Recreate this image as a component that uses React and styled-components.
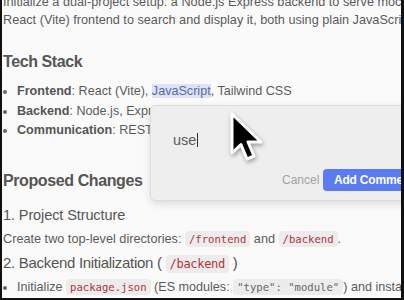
import React from "react";
import styled, { createGlobalStyle } from "styled-components";

const Global = createGlobalStyle`
  html, body { margin: 0; padding: 0; background: #111; }
  body { font-family: "Liberation Sans", Arial, sans-serif; }
`;

const Frame = styled.div`
  width: 404px;
  height: 300px;
  background: #111;
  display: flex;
  align-items: flex-start;
`;

const Page = styled.div`
  position: relative;
  margin-left: 2px;
  width: 399px;
  height: 298px;
  background: #fafafa;
  overflow: hidden;
  color: #5a5a5a;
`;

const Content = styled.div`
  margin-top: -7px;
  padding-left: 1px;
  white-space: nowrap;
`;

const Para = styled.p`
  margin: ${(p) => p.$m || "0"};
  font-size: 12.7px;
  line-height: ${(p) => p.$lh || "18px"};
`;

const H2 = styled.h2`
  margin: ${(p) => p.$m || "0"};
  font-size: 16px;
  letter-spacing: -0.4px;
  line-height: 24px;
  font-weight: 700;
  color: #555;
`;

const H3 = styled.h3`
  margin: ${(p) => p.$m || "0"};
  font-size: ${(p) => p.$size || "14.5px"};
  letter-spacing: ${(p) => p.$ls || "-0.1px"};
  line-height: 22px;
  font-weight: 400;
  color: #555;
`;

const List = styled.ul`
  margin: ${(p) => p.$m || "0"};
  padding-left: 14px;
  font-size: 12.6px;
  line-height: 19.5px;
  li::marker { color: #666; }
`;

const Strong = styled.b`
  font-weight: 700;
  color: #555;
`;

const Highlight = styled.span`
  background: #dde2f6;
  color: #5a6aa8;
`;

const Code = styled.code`
  font-family: "DejaVu Sans Mono", "Liberation Mono", monospace;
  font-size: ${(p) => p.$size || "10.6px"};
  color: #b4323a;
  background: #ececec;
  border-radius: 4px;
  padding: 2px 4px;
`;

const CodePlain = styled(Code)`
  color: #666;
`;

const Popup = styled.div`
  position: absolute;
  left: 148px;
  top: 105px;
  width: 290px;
  height: 96px;
  box-sizing: border-box;
  background: #eeeeee;
  border: 1px solid #dcdcdc;
  border-radius: 5px;
  box-shadow: 0 3px 8px rgba(0, 0, 0, 0.12);
  display: flex;
  flex-direction: column;
`;

const InputArea = styled.div`
  padding: 23px 0 0 22px;
  font-size: 14.5px;
  line-height: 18px;
  color: #5c5c5c;
  display: flex;
  align-items: center;
  height: 44px;
  box-sizing: border-box;
`;

const Caret = styled.span`
  display: inline-block;
  width: 1px;
  height: 14px;
  background: #333;
  margin-left: 1px;
`;

const Footer = styled.div`
  display: flex;
  align-items: center;
  gap: 6px;
  padding-left: 131px;
  margin-top: 19px;
`;

const Cancel = styled.span`
  font-size: 12px;
  color: #a2a2a2;
  width: 35px;
`;

const AddButton = styled.div`
  background: #5b7cf0;
  color: #fff;
  font-weight: 700;
  font-size: 12px;
  letter-spacing: -0.2px;
  height: 22px;
  line-height: 22px;
  padding: 0 12px 0 11px;
  border-radius: 4px;
  white-space: nowrap;
`;

const Cursor = styled.svg`
  position: absolute;
  left: 224px;
  top: 109px;
  filter: drop-shadow(1px 2px 2px rgba(0, 0, 0, 0.35));
`;

export default function App() {
  return (
    <>
      <Global />
      <Frame>
        <Page>
          <Content>
            <Para>Initialize a dual-project setup: a Node.js Express backend to serve mock</Para>
            <Para>React (Vite) frontend to search and display it, both using plain JavaScript.</Para>
            <H2 $m="21px 0 0 0">Tech Stack</H2>
            <List $m="8px 0 0 0">
              <li><Strong>Frontend</Strong>: React (Vite), <Highlight>JavaScript</Highlight>, Tailwind CSS</li>
              <li><Strong>Backend</Strong>: Node.js, Express</li>
              <li><Strong>Communication</Strong>: REST API</li>
            </List>
            <H2 $m="28px 0 0 0">Proposed Changes</H2>
            <H3 $m="11px 0 0 0">1. Project Structure</H3>
            <Para $lh="20px" $m="3px 0 0 0">
              Create two top-level directories: <Code>/frontend</Code> and <Code>/backend</Code>.
            </Para>
            <H3 $size="15px" $ls="-0.3px" $m="3px 0 0 0">
              2. Backend Initialization ( <Code $size="12px">/backend</Code> )
            </H3>
            <List $m="3px 0 0 0">
              <li>
                Initialize <Code>package.json</Code> (ES modules: <CodePlain>"type": "module"</CodePlain>) and install
              </li>
            </List>
          </Content>
          <Popup>
            <InputArea>
              use<Caret />
            </InputArea>
            <Footer>
              <Cancel>Cancel</Cancel>
              <AddButton>Add Comment</AddButton>
            </Footer>
          </Popup>
          <Cursor width="44" height="60" viewBox="0 0 44 60">
            <path
              d="M6 5 L6 44 L15 35.5 L21 50 L28 47 L22 33 L35 33 Z"
              fill="#000"
              stroke="#fff"
              strokeWidth="3"
              strokeLinejoin="round"
            />
          </Cursor>
        </Page>
      </Frame>
    </>
  );
}
